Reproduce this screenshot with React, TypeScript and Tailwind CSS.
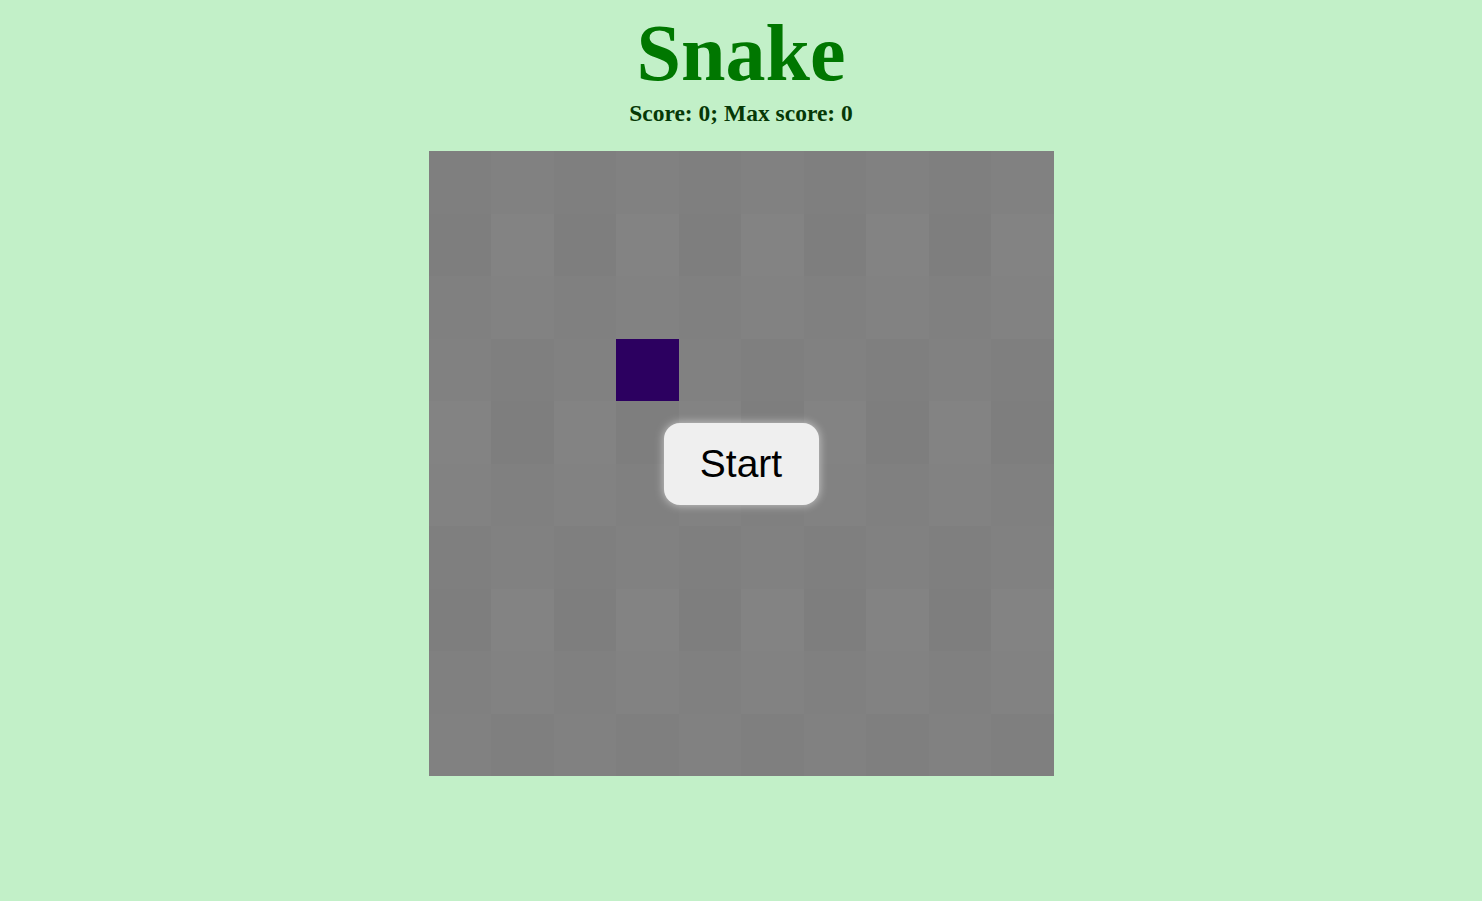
const shades = ["#7f7f7f", "#828282", "#808080", "#7e7e7e", "#838383", "#818181"];

const Cell = ({ r, c }: { r: number; c: number }) => {
  const snake = r === 3 && c === 3;
  const shade = shades[(r * 7 + c * 3 + ((r + c) % 2) * 2) % shades.length];
  return <div style={{ backgroundColor: snake ? "#2c0060" : shade }} />;
};

const App = () => {
  return (
    <div className="min-h-screen bg-[#c2f0c8] flex flex-col items-center font-['Liberation_Serif',serif]">
      <h1 className="text-[80px] font-bold leading-none text-[#007700] mt-[13px]">Snake</h1>
      <p className="text-[23.5px] font-bold text-[#063806] mt-[3px]">Score: 0; Max score: 0</p>
      <div className="relative mt-[20px] w-[625px] h-[625px]">
        <div className="grid grid-cols-10 grid-rows-10 w-full h-full">
          {Array.from({ length: 100 }, (_, i) => (
            <Cell key={i} r={Math.floor(i / 10)} c={i % 10} />
          ))}
        </div>
        <div className="absolute inset-0 flex items-center justify-center">
          <button className="w-[155px] h-[82px] rounded-[16px] bg-[#efefef] text-[39px] text-black font-['Liberation_Sans',sans-serif] shadow-[0_0_10px_rgba(255,255,255,0.6)]">
            Start
          </button>
        </div>
      </div>
    </div>
  );
};

export default App;
